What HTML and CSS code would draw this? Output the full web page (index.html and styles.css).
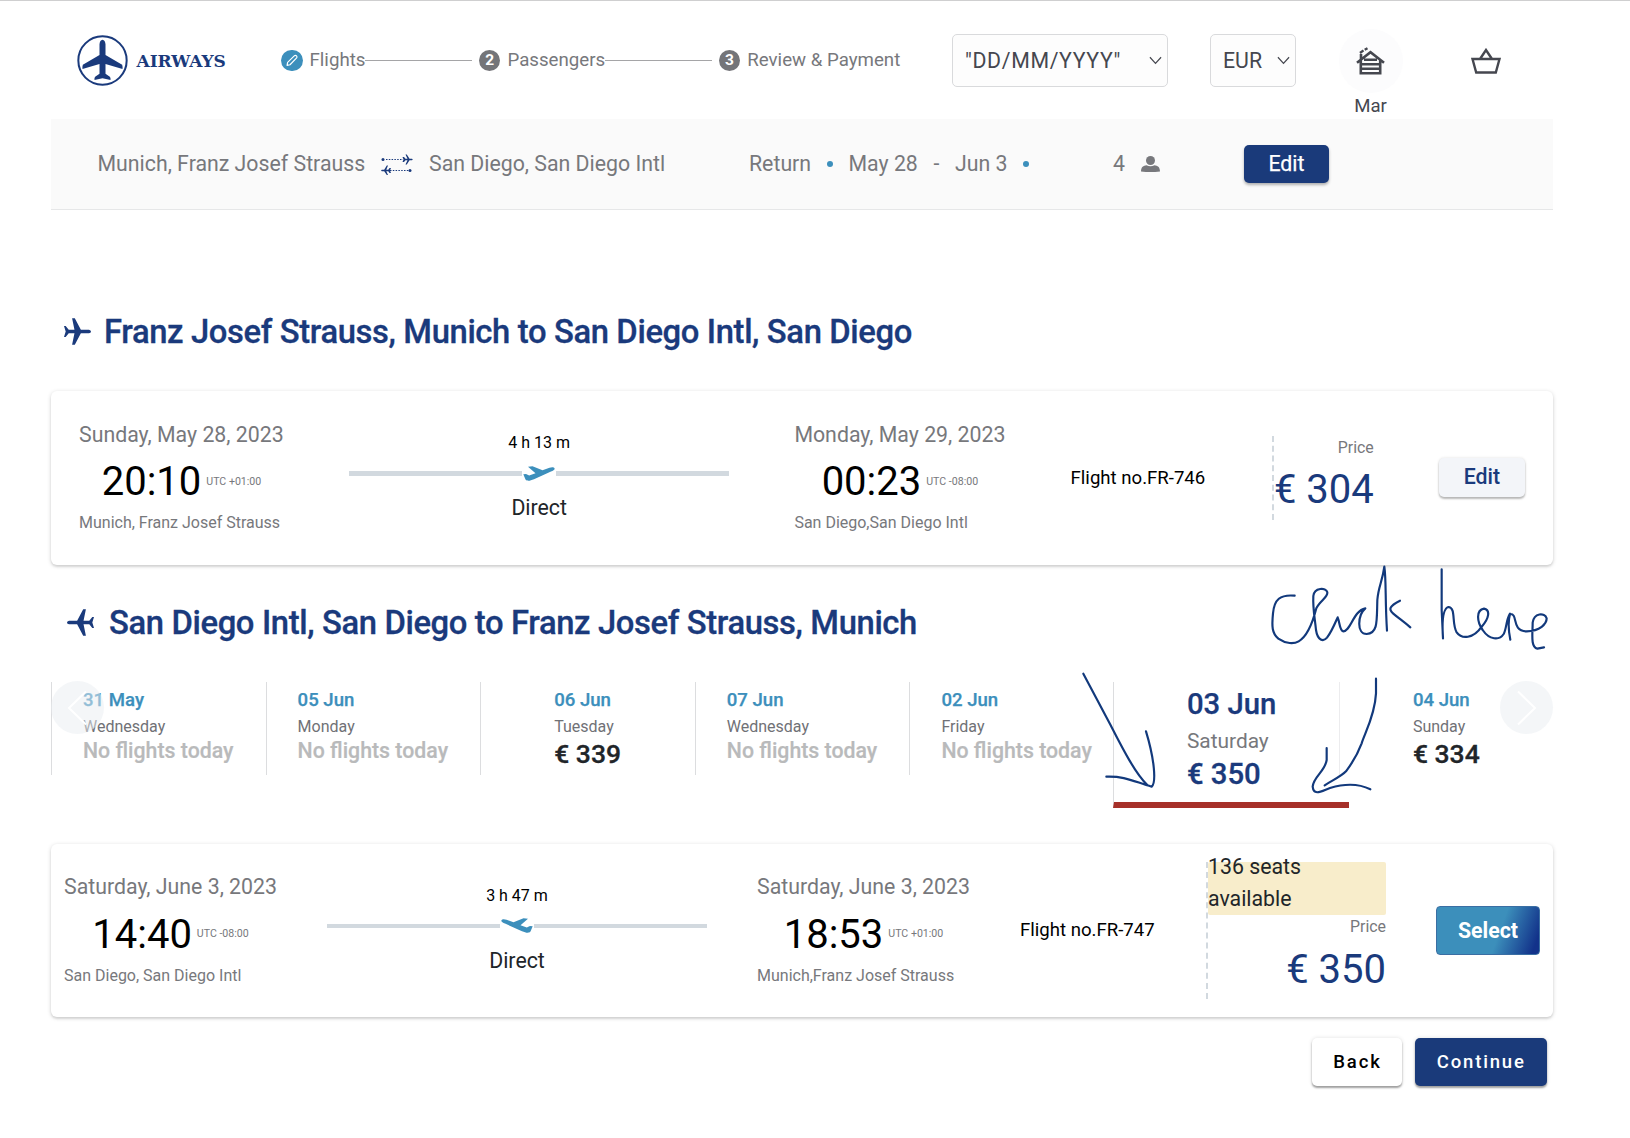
FILE: index.html
```html
<!DOCTYPE html>
<html lang="en">
<head>
<meta charset="utf-8">
<title>Airways – Flights</title>
<link rel="stylesheet" href="styles.css">
</head>
<body>
<svg class="defs" width="0" height="0" aria-hidden="true">
  <symbol id="plane" viewBox="73 86 80 80"><path d="M73 110L78 110L87 121L104 121L97 87L105 87L123 121L147 121Q153 123 153 126Q153 130 147 131.500L123 131.500L105 165L97 165L104 131.500L87 131.500L78 142L73 142L78 126Z"/></symbol>
  <symbol id="takeoff" viewBox="0 0 32 15"><path d="M.3 8.200L3 8L6.200 9.600L12.500 7.300L5 .700L9.500 .200L19.500 4.200L26.500 1.700C29.500 .600 31.700 1.300 31.600 2.700C31.500 4 30 4.700 28 5.600L11 13.300C7 15 4 15.400 2.500 13.600Z"/></symbol>
  <symbol id="chevron" viewBox="0 0 14 9"><path d="M1 1L7 7.500L13 1" fill="none" stroke="currentColor" stroke-width="1.300"/></symbol>
</svg>
<div class="page">
  <header class="header">
    <a class="logo">
      <svg class="logo-mark" viewBox="110 106 152 153"><circle cx="186" cy="182.500" r="72.500" fill="none" stroke="currentColor" stroke-width="6"/><path fill="currentColor" d="M177 166V134Q178 121 186 120Q194 121 195 134V166L245 195Q247 201 246 208L195 193V222L208 231Q211 234 210 241L186 236L162 241Q161 234 164 231L177 222V193L126 208Q125 201 127 195Z"/></svg>
      <span class="logo-text">AIRWAYS</span>
    </a>
    <ol class="steps">
      <li class="step"><span class="step-dot current"><svg viewBox="0 0 22 22"><path d="M6.200 15.800L6.800 12.600L13.800 5.800Q14.800 5 15.900 6Q16.900 7.100 16 8.100L9.200 15.100Z" fill="none" stroke="#fff" stroke-width="1.200" stroke-linejoin="round"/></svg></span><span class="step-label">Flights</span><i class="step-line"></i></li>
      <li class="step"><span class="step-dot">2</span><span class="step-label">Passengers</span><i class="step-line"></i></li>
      <li class="step"><span class="step-dot">3</span><span class="step-label">Review &amp; Payment</span></li>
    </ol>
    <div class="select date-format"><span>"DD/MM/YYYY"</span><svg class="chev"><use href="#chevron"/></svg></div>
    <div class="select currency"><span>EUR</span><svg class="chev"><use href="#chevron"/></svg></div>
    <div class="account">
      <span class="account-icon"><svg viewBox="0 0 29 28" fill="none" stroke="currentColor" stroke-width="2.600"><path d="M1 15.800L14.500 5.200L28 15.800M4.800 13V26.200H24.200V13M4.500 21.700H24.500M4.500 17.300H24.500M8 12.700H21M5 12V7"/><path d="M4 6L7.500 3.400M8.700 2.700L11.500 1.200" stroke-width="2.400"/></svg></span>
      <span class="account-name">Mar</span>
    </div>
    <svg class="basket" viewBox="0 0 30 26" fill="none" stroke="currentColor" stroke-width="2.400"><path d="M1.500 11H28.500L24.800 24.500H5.200ZM9 11L15 2L21 11"/></svg>
  </header>

  <section class="summary">
    <span class="from">Munich, Franz Josef Strauss</span>
    <svg class="swap" viewBox="0 0 32 21" fill="currentColor"><circle cx="2" cy="5.500" r="1.500"/><path d="M5 5.500H22M9 16.500H28" stroke="currentColor" stroke-dasharray="1.500 1.300" fill="none"/><circle cx="29" cy="16.500" r="1.500"/><path d="M21.500 3L23 3L24.500 4.700H26.500L24.500 .500H25.800L28.500 4.700H31L31.800 5.500L31 6.300H28.500L25.800 10.500H24.500L26.500 6.300H24.500L23 8H21.500L22.500 5.500ZM10 14L8.500 14L7.300 15.700H5.300L7 11.500H5.800L3.200 15.700H.8L0 16.500L.8 17.300H3.200L5.800 21H7L5.300 17.300H7.300L8.500 19H10L9 16.500Z"/></svg>
    <span class="to">San Diego, San Diego Intl</span>
    <span class="trip">Return</span><i class="dot"></i><span class="depart">May 28</span><span class="dash">-</span><span>Jun 3</span><i class="dot"></i>
    <span class="pax">4</span>
    <svg class="person" viewBox="0 0 19 16" fill="currentColor"><circle cx="9.500" cy="4.500" r="4.500"/><path d="M0 15.500C0 11 2.500 9.600 5.500 9.300Q9.500 11.300 13.500 9.300C16.500 9.600 19 11 19 15.500Q9.500 16.500 0 15.500Z"/></svg>
    <button class="btn primary small">Edit</button>
  </section>

  <main>
    <h2 class="route-title outbound"><svg><use href="#plane"/></svg>Franz Josef Strauss, Munich to San Diego Intl, San Diego</h2>

    <article class="card outbound-card">
      <div class="leg leg-a">
        <span class="date">Sunday, May 28, 2023</span>
        <div class="clock"><span class="time">20:10</span><span class="utc">UTC +01:00</span></div>
        <span class="place">Munich, Franz Josef Strauss</span>
      </div>
      <div class="path">
        <span class="duration">4 h 13 m</span>
        <div class="track"><i></i><svg><use href="#takeoff"/></svg><i></i></div>
        <span class="stops">Direct</span>
      </div>
      <div class="leg leg-b">
        <span class="date">Monday, May 29, 2023</span>
        <div class="clock"><span class="time">00:23</span><span class="utc">UTC -08:00</span></div>
        <span class="place">San Diego,San Diego Intl</span>
      </div>
      <span class="flight-no">Flight no.FR-746</span>
      <div class="price"><span class="price-label">Price</span><span class="amount">€ 304</span></div>
      <button class="btn light">Edit</button>
    </article>

    <h2 class="route-title inbound"><svg class="flip"><use href="#plane"/></svg>San Diego Intl, San Diego to Franz Josef Strauss, Munich</h2>

    <div class="days">
      <div class="day"><b>31 May</b><span>Wednesday</span><em>No flights today</em></div>
      <div class="day"><b>05 Jun</b><span>Monday</span><em>No flights today</em></div>
      <div class="day priced"><b>06 Jun</b><span>Tuesday</span><strong>€ 339</strong></div>
      <div class="day"><b>07 Jun</b><span>Wednesday</span><em>No flights today</em></div>
      <div class="day short"><b>02 Jun</b><span>Friday</span><em>No flights today</em></div>
      <div class="day selected"><b>03 Jun</b><span>Saturday</span><strong>€ 350</strong></div>
      <div class="day priced last"><b>04 Jun</b><span>Sunday</span><strong>€ 334</strong></div>
      <button class="nav prev"><svg class="flip" viewBox="0 0 53 53"><path d="M18 10.500L35 27L18 43.500"/></svg></button>
      <button class="nav next"><svg viewBox="0 0 53 53"><path d="M18 10.500L35 27L18 43.500"/></svg></button>
    </div>

    <article class="card inbound-card">
      <div class="leg leg-c">
        <span class="date">Saturday, June 3, 2023</span>
        <div class="clock"><span class="time">14:40</span><span class="utc">UTC -08:00</span></div>
        <span class="place">San Diego, San Diego Intl</span>
      </div>
      <div class="path">
        <span class="duration">3 h 47 m</span>
        <div class="track"><i></i><svg class="flip"><use href="#takeoff"/></svg><i></i></div>
        <span class="stops">Direct</span>
      </div>
      <div class="leg leg-c">
        <span class="date">Saturday, June 3, 2023</span>
        <div class="clock"><span class="time">18:53</span><span class="utc">UTC +01:00</span></div>
        <span class="place">Munich,Franz Josef Strauss</span>
      </div>
      <span class="flight-no">Flight no.FR-747</span>
      <div class="price wide"><div class="seats">136 seats available</div><span class="price-label">Price</span><span class="amount">€ 350</span></div>
      <button class="btn select-btn">Select</button>
    </article>

    <div class="actions"><button class="btn back">Back</button><button class="btn primary continue">Continue</button></div>
  </main>

  <svg class="scribble" viewBox="0 0 1530 780" role="img" aria-label="Click here">
    <path d="M704 107C660 103 643 118 639 160C635 200 636 220 655 236C678 252 702 252 716 244C745 228 760 180 769 145C780 122 804 112 802 97C798 82 763 82 760 108C758 145 764 170 768 210C773 242 790 246 801 233C815 215 825 190 833 172C840 188 838 212 850 214C872 214 880 152 916 145C893 165 889 222 920 222C955 220 950 180 952 120C955 80 967 65 973 20C979 60 975 120 981 212M1020 122C988 138 985 148 999 160C1015 174 1030 184 1051 202"/>
    <path d="M1145 28V150L1149 235C1146 190 1147 146 1165 141C1189 142 1174 190 1190 217C1205 238 1240 237 1265 200C1287 175 1292 150 1272 146C1248 150 1250 185 1268 210C1288 240 1318 242 1331 222C1340 205 1338 180 1350 161M1351 239C1345 210 1345 180 1350 162C1376 160 1352 213 1400 214C1440 213 1460 192 1460 175C1454 157 1422 158 1418 188C1418 220 1411 262 1432 266L1452 262"/>
    <path d="M70 341L150 492C185 560 225 640 262 675M139 650C195 648 220 664 275 680C289 668 284 600 258 514"/>
    <path d="M948 356V400C945 465 915 518 905 550C890 590 870 618 858 634C843 650 815 662 794 676M800 564V600C795 635 760 650 758 680C761 710 787 692 810 684C850 672 895 670 931 688"/>
  </svg>
</div>
</body>
</html>
```
FILE: styles.css
```css
* { box-sizing: border-box; }
body { margin: 0; background: #fff; font-family: Roboto, "Liberation Sans", sans-serif; font-size: 21.300px; color: #212529; }
button { font: inherit; padding: 0; border: 0; }
.defs { position: absolute; }
.page { position: relative; height: 1138px; padding: 0 77px 0 51px; border-top: 1px solid #cfcfd0; overflow: hidden; }
.flip { transform: scaleX(-1); }

.header { display: flex; align-items: center; height: 118px; padding-left: 25.500px; padding-top: 1px; color: #45474f; }
.logo { display: flex; align-items: center; gap: 9px; width: 204.500px; color: #1a3a7c; }
.logo-mark { width: 51px; height: 51px; }
.logo-text { font: bold 17px "DejaVu Serif", serif; letter-spacing: -.05px; white-space: nowrap; }
.steps { display: flex; list-style: none; margin: 0; padding: 0; width: 671px; gap: 6.500px; font-size: 18.700px; color: #77787c; }
.step { display: flex; align-items: center; white-space: nowrap; }
.step-dot { width: 21.500px; height: 21.500px; border-radius: 50%; background: #747579; color: #fff; font-size: 15.500px; font-weight: 700; line-height: 21.500px; text-align: center; margin-right: 7px; }
.step-dot.current { background: #3c8fbc; }
.step-dot svg { display: block; }
.step-label { position: relative; top: -1px; }
.step-line { width: 107px; height: 1px; background: #a5a5a7; }
.select { display: flex; align-items: center; justify-content: space-between; height: 53px; border: 1px solid #d9dadc; border-radius: 5px; padding: 0 5px 0 12px; background: #fdfdfd; }
.date-format { width: 216px; letter-spacing: .65px; }
.currency { width: 85.500px; margin-left: 42px; padding-left: 12px; }
.chev { width: 13px; height: 9px; }
.account { display: flex; flex-direction: column; align-items: center; width: 64px; margin: 28px 0 0 43px; }
.account-icon { display: flex; align-items: center; justify-content: center; width: 64px; height: 64px; border-radius: 50%; background: #fcfcfd; }
.account-icon svg { width: 29px; height: 28px; }
.account-name { font-size: 18.600px; line-height: 28px; position: relative; top: -1px; }
.basket { width: 30px; height: 26px; margin-left: 68px; }

.summary { display: flex; align-items: center; height: 91px; padding-left: 46.500px; padding-bottom: 1px; background: #fafafa; border-bottom: 1px solid #e6e7e8; color: #77787c; white-space: nowrap; }
.from { width: 283.500px; }
.swap { width: 32px; height: 21px; color: #1a3a7c; margin-right: 16px; position: relative; top: 1px; }
.to { width: 320px; }
.trip { width: 77.500px; }
.dot { width: 6px; height: 6px; border-radius: 50%; background: #3c8fbc; }
.depart { margin-left: 16px; width: 85px; }
.dash { width: 21.500px; }
.dash + span { width: 68px; }
.pax { margin-left: 84px; width: 28px; }
.person { width: 19px; height: 16px; }
.btn { display: block; border-radius: 5px; text-align: center; font-weight: 500; }
.primary { background: #1a3a7a; color: #fff; box-shadow: 0 2px 3px rgba(0,0,0,.3); }
.small { width: 85px; height: 38px; margin-left: 84px; font-weight: 400; -webkit-text-stroke: .25px #fff; }

.route-title { display: flex; align-items: center; height: 40px; margin: 0; font-size: 32.800px; font-weight: 500; letter-spacing: -.375px; line-height: 40px; color: #1a3a7c; white-space: nowrap; -webkit-text-stroke: .3px #1a3a7c; }
.route-title svg { width: 27px; height: 27px; fill: currentColor; }
.outbound { margin: 101.500px 0 39.500px; padding-left: 13px; }
.outbound svg { margin-right: 13px; }
.inbound { margin: 38px 0 39px; padding-left: 16px; }
.inbound svg { margin-right: 15px; }

.card { display: flex; align-items: center; justify-content: space-between; height: 173.500px; border-radius: 6px; background: #fff; box-shadow: 0 1px 4px rgba(0,0,0,.17), 0 2px 2px rgba(0,0,0,.08); white-space: nowrap; }
.outbound-card { padding: 0 28px; }
.inbound-card { padding: 0 13px; }
.leg { display: flex; flex-direction: column; height: 118px; }
.leg-a { width: 205px; }
.leg-b { width: 211px; }
.leg-c { width: 213px; }
.date { line-height: 32px; color: #77787c; }
.clock { display: flex; align-items: center; justify-content: center; gap: 5px; height: 61.500px; }
.time { font-size: 40px; color: #000; }
.utc { font-size: 10.600px; color: #77787c; position: relative; top: -.5px; }
.place { font-size: 16px; line-height: 22px; color: #77787c; }
.path { display: flex; flex-direction: column; align-items: center; width: 380px; height: 95px; }
.duration { font-size: 16px; line-height: 25px; color: #000; }
.track { display: flex; align-items: center; gap: 1px; width: 100%; height: 37px; position: relative; top: -.5px; }
.track i { flex: 1; height: 4.500px; background: #d2d9df; }
.track svg { width: 32px; height: 15px; fill: #3c8fbc; }
.stops { line-height: 31px; }
.flight-no { width: 136px; font-size: 18.600px; color: #000; }
.price { display: flex; flex-direction: column; align-items: flex-end; width: 102px; border-left: 2px dashed #d2d9df; }
.price-label { font-size: 15.900px; line-height: 24px; color: #77787c; }
.amount { font-size: 40px; line-height: 60px; color: #1a3a7c; }
.wide { width: 180px; }
.wide .amount { position: relative; top: 1px; }
.seats { width: 100%; height: 53px; border-radius: 2px; background: #f8edcb; line-height: 32px; white-space: normal; padding: 0 60px 0 0; display: flex; align-items: flex-end; font-size: 21.300px; }
.light { width: 86px; height: 39px; background: #f3f5f9; color: #1a3a7c; box-shadow: 0 2px 2px rgba(0,0,0,.25), 0 0 3px rgba(0,0,0,.12); padding-bottom: 2px; }
.select-btn { width: 104px; height: 49px; border: 1px solid #3a6ea3; border-radius: 4px; font-weight: 700; color: #fff; background: linear-gradient(110deg, #3c8fbb 60%, #12328a 94%); padding-top: 1px; }

.days { position: relative; display: flex; align-items: flex-start; height: 162px; white-space: nowrap; }
.day { display: flex; flex-direction: column; flex: none; width: 214.600px; height: 93px; padding: 5px 0 0 31px; border-left: 1px solid #dcdddf; }
.day b { font-size: 18.600px; font-weight: 500; line-height: 26px; color: #3c8fbc; -webkit-text-stroke: .25px; }
.day span { font-size: 16px; line-height: 27px; color: #707176; }
.day em { font-style: normal; font-weight: 500; line-height: 21px; color: #b9babb; -webkit-text-stroke: .2px; }
.day strong { font-size: 26.500px; font-weight: 500; line-height: 27px; -webkit-text-stroke: .3px; }
.priced { padding-left: 73px; }
.short { width: 204px; }
.selected { width: 236px; height: 126px; padding-left: 72.500px; border-bottom: 6px solid #a63029; color: #1a3a7c; }
.selected b { font-size: 29.300px; line-height: 35px; color: inherit; }
.selected span { font-size: 20.900px; line-height: 38px; color: #77787c; }
.selected strong { font-size: 29.300px; line-height: 28px; }
.last { margin-left: -10.500px; border-color: #ececee; }
.nav { position: absolute; top: -.5px; width: 53px; height: 53px; border-radius: 50%; background: rgba(233,237,242,.5); }
.nav svg { display: block; fill: none; stroke: #fff; stroke-width: 2; }
.prev { left: 0; }
.next { right: 0; }

.actions { display: flex; justify-content: flex-end; gap: 13px; margin-top: 21px; padding-right: 6.500px; font-size: 18.5px; }
.actions .btn { height: 48px; box-shadow: 0 2px 2px rgba(0,0,0,.35), 0 0 4px rgba(0,0,0,.12); letter-spacing: 1.850px; padding-left: 1px; }
.back { width: 90px; background: #fff; color: #000; }
.continue { width: 131.500px; }

.scribble { position: absolute; left: 1060px; top: 559px; width: 510px; height: 260px; fill: none; stroke: #12397c; stroke-width: 6.500; stroke-linecap: round; stroke-linejoin: round; pointer-events: none; }
```
